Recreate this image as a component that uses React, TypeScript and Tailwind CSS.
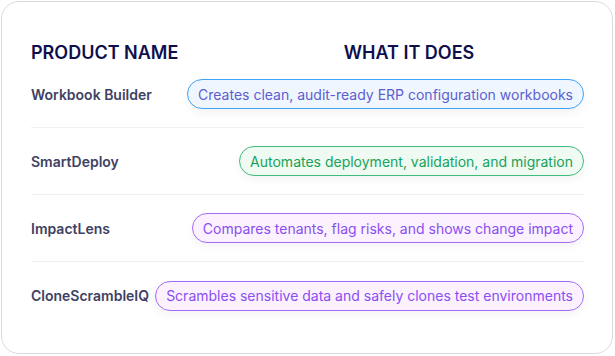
const ROWS = [
  {
    name: "Workbook Builder",
    text: "Creates clean, audit-ready ERP configuration workbooks",
    pill: "border-[#3ea2f7] bg-[#f0f6ff] text-[#5b5fcf]",
  },
  {
    name: "SmartDeploy",
    text: "Automates deployment, validation, and migration",
    pill: "border-[#3fbd7d] bg-[#effaf3] text-[#16a35a]",
  },
  {
    name: "ImpactLens",
    text: "Compares tenants, flag risks, and shows change impact",
    pill: "border-[#a46cf6] bg-[#fbf1ff] text-[#8a4ff2]",
  },
  {
    name: "CloneScrambleIQ",
    text: "Scrambles sensitive data and safely clones test environments",
    pill: "border-[#a46cf6] bg-[#fbf1ff] text-[#8a4ff2]",
  },
];

export default function App() {
  return (
    <div className="p-px bg-white" style={{ fontFamily: "Inter, 'Open Sans', sans-serif" }}>
      <div className="w-[612px] h-[353px] rounded-[18px] border border-[#dadada] bg-white pt-[42px] pl-[29px] pr-[28px]">
        <div className="flex items-center h-[17px] text-[18px] font-semibold text-[#0f0f4e] leading-[17px]">
          <div className="flex-1">PRODUCT NAME</div>
          <div className="w-[350px] text-center">WHAT IT DOES</div>
        </div>

        {ROWS.map((r, i) => (
          <div
            key={r.name}
            className={`flex items-center justify-between h-[67px] ${i < ROWS.length - 1 ? "border-b border-[#f0f0f4]" : ""}`}
          >
            <div className="text-[14px] font-semibold text-[#3e4163] whitespace-nowrap">{r.name}</div>
            <div
              className={`h-[30px] flex items-center px-[10px] rounded-full border text-[14px] whitespace-nowrap shadow-[0_4px_8px_rgba(30,30,60,0.05)] ${r.pill}`}
            >
              {r.text}
            </div>
          </div>
        ))}
      </div>
    </div>
  );
}
